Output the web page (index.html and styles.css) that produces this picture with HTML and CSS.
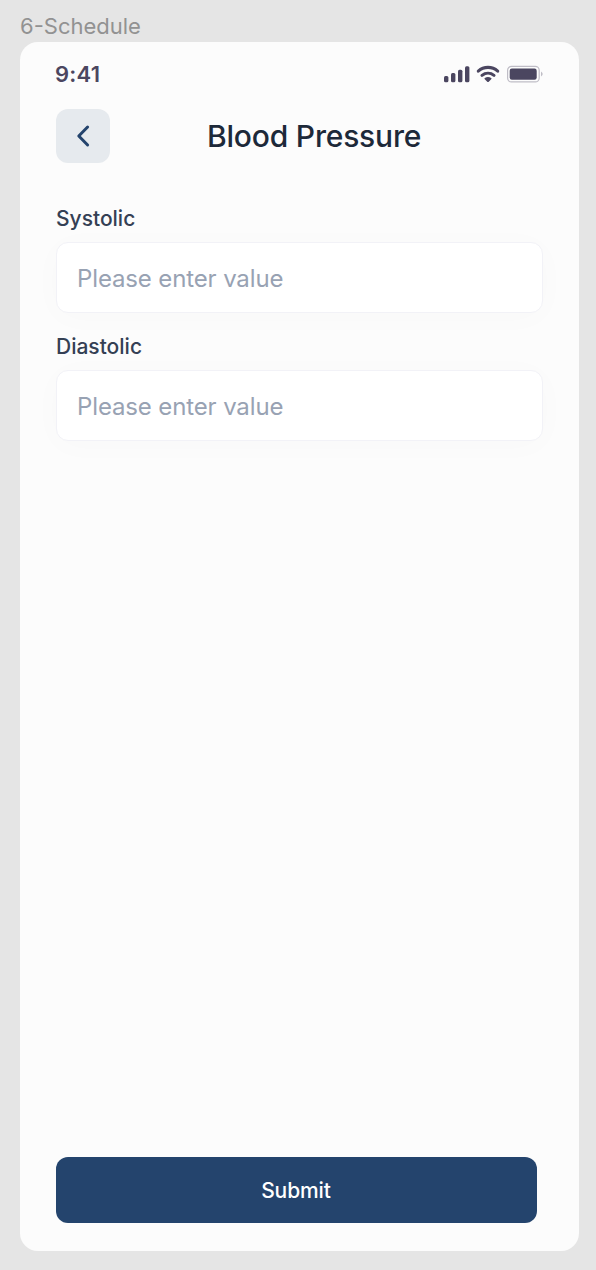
FILE: index.html
```html
<!DOCTYPE html>
<html lang="en">
<head>
<meta charset="utf-8">
<title>Blood Pressure</title>
<link rel="stylesheet" href="styles.css">
</head>
<body>
<div class="frame-name">6-Schedule</div>
<main class="screen">
  <div class="status">
    <span class="time">9:41</span>
    <svg class="indicators" width="100" height="18" viewBox="0 0 100 18">
      <g fill="#4b4660">
        <rect x="0" y="11" width="4.400" height="6.200" rx="1.500"/>
        <rect x="7" y="8" width="4.400" height="9.200" rx="1.500"/>
        <rect x="14" y="4.800" width="4.400" height="12.400" rx="1.500"/>
        <rect x="21" y="1.200" width="4.400" height="16" rx="1.500"/>
        <path d="M44 17q-.500 0-1-.5l-2.200-2.200q-.8-.8 0-1.400 3.200-1.600 6.400 0 .8.600 0 1.400l-2.200 2.200q-.500.5-1 .5z"/>
      </g>
      <path d="M34.300 6.100a14.500 14.500 0 0 1 19.400 0M38 10.400a9.600 9.600 0 0 1 12 0" fill="none" stroke="#4b4660" stroke-width="3.100" stroke-linecap="round"/>
      <rect x="63.600" y="1.300" width="31.600" height="15.600" rx="4" fill="none" stroke="#bfbdc6" stroke-width="1.200"/>
      <rect x="65.700" y="3.600" width="27" height="11.100" rx="2.200" fill="#4b4660"/>
      <path d="M97 6.600q3.400 2.500 0 5z" fill="#bfbdc6"/>
    </svg>
  </div>
  <header class="header">
    <button class="back" aria-label="Back"><svg width="16" height="24" viewBox="0 0 16 24"><path d="M12.600 3L3.800 12l8.800 9" fill="none" stroke="#24446d" stroke-width="3" stroke-linecap="round" stroke-linejoin="round"/></svg></button>
    <h1 class="title">Blood Pressure</h1>
  </header>
  <form class="form">
    <label class="field"><span class="label">Systolic</span><span class="box">Please enter value</span></label>
    <label class="field"><span class="label">Diastolic</span><span class="box">Please enter value</span></label>
  </form>
  <button class="submit">Submit</button>
</main>
</body>
</html>
```
FILE: styles.css
```css
* { box-sizing: border-box; }
body { margin: 0; height: 1270px; padding: 10px 17px 0 20px; background: #e5e5e5; font-family: Inter, sans-serif; }
button { border: 0; padding: 0; font: inherit; }
.frame-name { height: 32px; font-size: 22px; line-height: 32px; color: #929292; }
.screen { display: flex; flex-direction: column; height: 1209px; padding: 18px 36px 28px; background: #fcfcfc; border-radius: 18px; }
.status { display: flex; justify-content: space-between; height: 49px; margin: 0 -1px; }
.time { height: 28px; line-height: 28px; font-size: 22px; font-weight: 600; letter-spacing: .2px; color: #4b4660; }
.indicators { margin-top: 5px; }
.header { display: flex; gap: 97px; height: 54px; align-items: center; }
.back { display: flex; align-items: center; justify-content: center; width: 54px; height: 54px; border-radius: 12px; background: #e6eaee; }
.title { margin: 0; font-size: 30px; font-weight: 500; letter-spacing: -.2px; line-height: 40px; color: #1d2939; white-space: nowrap; }
.form { display: flex; flex-direction: column; gap: 20px; margin-top: 41px; }
.field { display: flex; flex-direction: column; gap: 9px; }
.label { height: 28px; line-height: 27px; font-size: 21px; font-weight: 500; color: #344054; }
.field:first-child .label { height: 29px; line-height: 30px; }
.box { display: flex; align-items: center; width: 487px; height: 71px; padding: 1px 0 0 20px; border: 1px solid #f2f2f7; border-radius: 12px; background: #fff; box-shadow: 0 4px 32px rgba(0,0,0,.02); font-size: 24px; letter-spacing: -.13px; color: #98a2b3; }
.submit { width: 481px; height: 66px; margin-top: auto; padding-right: 1px; border-radius: 12px; background: #24446d; color: #fff; font-size: 21px; font-weight: 500; letter-spacing: -.1px; }
```
